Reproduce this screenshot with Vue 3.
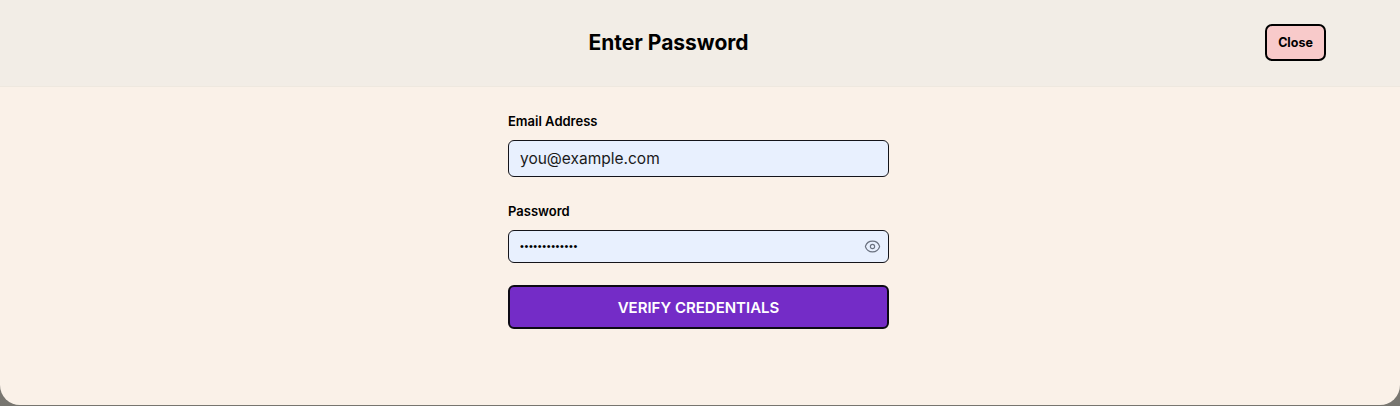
<script setup>
import { ref } from 'vue'
const email = ref('')
const password = ref('secretpassw0r')
</script>

<template>
  <div class="page">
    <div class="modal">
      <header class="header">
        <h1 class="title">Enter Password</h1>
        <button class="close" type="button">Close</button>
      </header>
      <form class="form" @submit.prevent>
        <label class="label" for="email">Email Address</label>
        <input id="email" v-model="email" class="input email" type="email" placeholder="you@example.com" />
        <label class="label pw-label" for="pw">Password</label>
        <div class="pw-wrap">
          <input id="pw" v-model="password" class="input pw" type="password" />
          <svg class="eye" viewBox="0 0 24 24" fill="none" stroke="currentColor" stroke-width="1.6" stroke-linecap="round" stroke-linejoin="round" aria-hidden="true">
            <path d="M2.04 12.32a1 1 0 0 1 0-.64C3.42 7.51 7.36 4.5 12 4.5s8.57 3.01 9.96 7.18a1 1 0 0 1 0 .64C20.58 16.49 16.64 19.5 12 19.5s-8.57-3.01-9.96-7.18Z" />
            <circle cx="12" cy="12" r="3" />
          </svg>
        </div>
        <button class="submit" type="submit">VERIFY CREDENTIALS</button>
      </form>
    </div>
  </div>
</template>

<style>
html, body { margin: 0; padding: 0; background: #8f8d88; }
</style>

<style scoped>
.page {
  width: 1400px;
  height: 406px;
  overflow: hidden;
  background: linear-gradient(#b5b3ad, #77756f);
  font-family: Inter, "Liberation Sans", sans-serif;
}
.modal {
  height: 405px;
  background: #faf1e8;
  border-radius: 0 0 20px 20px;
  overflow: hidden;
}
.header {
  height: 87px;
  box-sizing: border-box;
  display: flex;
  align-items: center;
  padding: 0 74px 2px 72px;
  background: #f2ede6;
  border-bottom: 1px solid #eee8df;
}
.title {
  flex: 1;
  margin: 0;
  padding-top: 2px;
  text-align: center;
  font-size: 21px;
  line-height: 28px;
  font-weight: 700;
  color: #000;
}
.close {
  width: 61px;
  height: 37px;
  padding: 0;
  box-sizing: border-box;
  border: 2px solid #000;
  border-radius: 7px;
  background: #f8caca;
  font: 700 12.5px Inter, "Liberation Sans", sans-serif;
  color: #000;
}
.form {
  width: 381px;
  margin-left: 508px;
  padding-top: 25px;
  display: flex;
  flex-direction: column;
}
.label {
  font-size: 13px;
  line-height: 18px;
  font-weight: 600;
  color: #000;
}
.pw-label { margin-top: 25px; }
.input {
  box-sizing: border-box;
  width: 100%;
  display: block;
  border: 1px solid #14141a;
  border-radius: 6px;
  background: #e8f0fe;
  padding: 0 11px;
  color: #000;
  font-family: Inter, "Liberation Sans", sans-serif;
  outline: none;
}
.email {
  margin-top: 10px;
  height: 37px;
  font-size: 15.5px;
}
.email::placeholder { color: #1a1a1a; opacity: 1; }
.pw-wrap {
  position: relative;
  margin-top: 10px;
}
.pw {
  height: 33px;
  padding-bottom: 2px;
  font-family: "Liberation Sans", sans-serif;
  font-size: 11px;
  letter-spacing: 0.6px;
}
.eye {
  position: absolute;
  right: 8px;
  top: 7.5px;
  width: 17px;
  height: 17px;
  color: #6b7280;
}
.submit {
  margin-top: 22px;
  height: 44px;
  box-sizing: border-box;
  border: 2px solid #0c0a14;
  border-radius: 6px;
  background: #742cc7;
  color: #fff;
  font: 600 15px Inter, "Liberation Sans", sans-serif;
  padding: 0;
}
</style>
